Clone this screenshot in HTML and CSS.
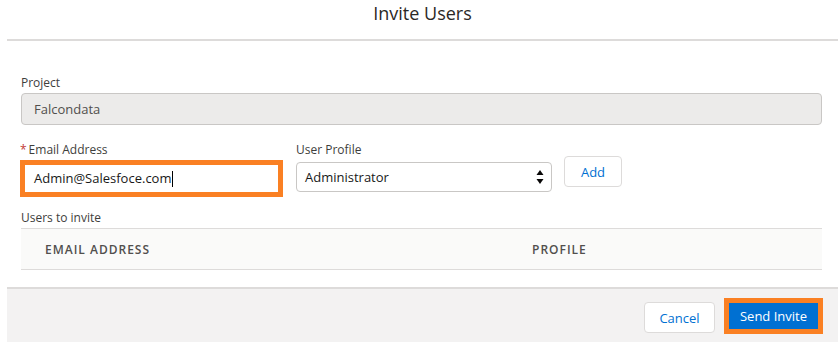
FILE: index.html
```html
<!DOCTYPE html>
<html lang="en">
<head>
    <meta charset="UTF-8">
    <meta name="viewport" content="width=device-width, initial-scale=1.0">
    <title>Invite Users</title>
    <link rel="stylesheet" href="styles.css">
</head>
<body>
    <div class="modal">
        <div class="modal-header">
            <h2 class="modal-title">Invite Users</h2>
        </div>
        <div class="modal-body">
            <div class="field">
                <label class="field-label">Project</label>
                <div class="input readonly">Falcondata</div>
            </div>
            <div class="field-row">
                <div class="field email-field">
                    <label class="field-label"><abbr class="required">*</abbr>Email Address</label>
                    <div class="highlight">
                        <div class="input email-input">Admin@Salesfoce.com<span class="caret"></span></div>
                    </div>
                </div>
                <div class="field profile-field">
                    <label class="field-label">User Profile</label>
                    <div class="input select">
                        <span>Administrator</span>
                        <svg class="select-arrows" width="8" height="16" viewBox="0 0 8 16">
                            <path d="M4 1 L7.5 6 L0.5 6 Z" fill="#080707"/>
                            <path d="M0.5 10 L7.5 10 L4 15 Z" fill="#080707"/>
                        </svg>
                    </div>
                </div>
                <button class="btn btn-neutral add-btn">Add</button>
            </div>
            <div class="field-label invite-label">Users to invite</div>
            <div class="invite-table">
                <div class="th">Email Address</div>
                <div class="th">Profile</div>
            </div>
        </div>
        <div class="modal-footer">
            <button class="btn btn-neutral">Cancel</button>
            <div class="highlight">
                <button class="btn btn-brand">Send Invite</button>
            </div>
        </div>
    </div>
</body>
</html>
```

FILE: styles.css
```css
:root {
    --text: #3e3e3c;
    --border: #dddbda;
    --input-border: #c9c7c5;
    --brand: #0070d2;
    --highlight: #fa8023;
}
body {
    margin: 0;
    font-family: 'Open Sans', 'Noto Sans', sans-serif;
    color: var(--text);
    background: #fff;
    overflow: hidden;
}
.modal {
    margin-left: 7px;
    height: 342px;
    display: flex;
    flex-direction: column;
}
.modal-header {
    height: 39px;
    border-bottom: 2px solid var(--border);
    text-align: center;
}
.modal-title {
    margin: 0;
    padding-top: 2px;
    font-size: 18px;
    font-weight: 400;
    line-height: 22px;
    color: #2b2826;
}
.modal-body {
    padding: 33px 16px 0 14px;
}
.field-label {
    display: block;
    font-size: 12px;
    line-height: 18px;
    color: var(--text);
}
.required {
    color: #c23934;
    text-decoration: none;
    margin-right: 2px;
}
.input {
    box-sizing: border-box;
    font-size: 13px;
    color: #181818;
    background: #fff;
    border: 1px solid var(--input-border);
    border-radius: 4px;
}
.readonly {
    margin-top: 1px;
    height: 32px;
    line-height: 30px;
    padding: 0 12px;
    background: #ecebea;
    color: #514f4d;
}
.field-row {
    display: flex;
    align-items: flex-start;
    margin-top: 16px;
}
.highlight {
    border: 5px solid var(--highlight);
    display: flex;
}
.email-field {
    width: 263px;
    margin-left: -1px;
}
.email-field .highlight {
    margin-top: 1px;
}
.email-input {
    width: 100%;
    height: 27px;
    line-height: 27px;
    padding: 0 9px;
    border: none;
    border-radius: 0;
    display: flex;
    align-items: center;
}
.caret {
    display: inline-block;
    width: 1px;
    height: 16px;
    background: #000;
    margin-left: 1px;
}
.profile-field {
    width: 256px;
    margin-left: 13px;
}
.select {
    margin-top: 3px;
    height: 30px;
    padding: 0 7px 0 8px;
    display: flex;
    align-items: center;
    justify-content: space-between;
}
.btn {
    font-family: inherit;
    font-size: 13px;
    border-radius: 4px;
    cursor: pointer;
    padding: 0;
}
.btn-neutral {
    background: #fff;
    border: 1px solid var(--border);
    color: var(--brand);
}
.add-btn {
    margin-left: 12px;
    margin-top: 15px;
    width: 58px;
    height: 31px;
}
.invite-label {
    margin-top: 12px;
}
.invite-table {
    margin-top: 1px;
    display: grid;
    grid-template-columns: 487px 1fr;
    height: 42px;
    box-sizing: border-box;
    background: #fafaf9;
    border-top: 1px solid var(--border);
    border-bottom: 1px solid var(--border);
    align-items: center;
}
.th {
    padding-left: 24px;
    font-size: 12px;
    font-weight: 600;
    letter-spacing: 1px;
    text-transform: uppercase;
    color: #514f4d;
}
.modal-footer {
    margin-top: 17px;
    flex: 1;
    background: #f3f2f2;
    border-top: 2px solid var(--border);
    display: flex;
    justify-content: flex-end;
    align-items: flex-start;
    gap: 9px;
    padding: 9px 15px 0 0;
}
.modal-footer .btn-neutral {
    margin-top: 4px;
    width: 71px;
    height: 31px;
}
.btn-brand {
    width: 89px;
    height: 26px;
    border: none;
    border-radius: 0;
    background: var(--brand);
    color: #fff;
}
```
